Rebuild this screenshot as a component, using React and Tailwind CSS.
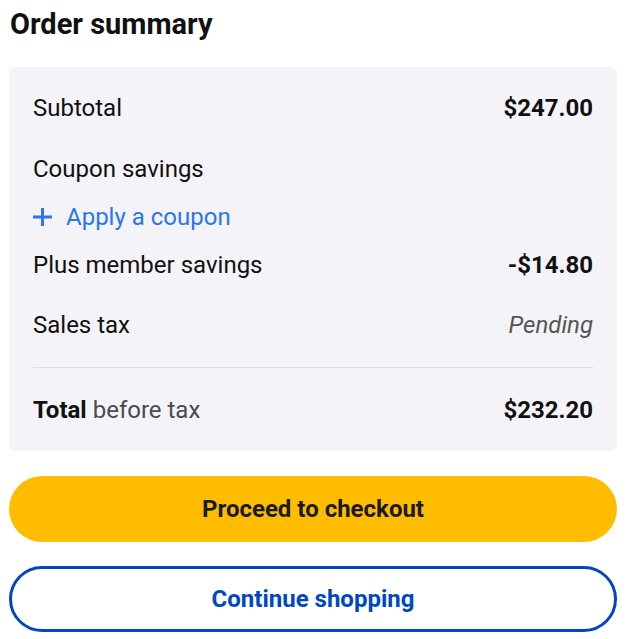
const Row = ({ label, value, className = '' }) => (
  <div className={`flex items-center justify-between ${className}`}>
    <span>{label}</span>
    <span>{value}</span>
  </div>
);

const PlusIcon = () => (
  <svg width="19" height="18" viewBox="0 0 19 18" fill="none" stroke="currentColor" strokeWidth="3">
    <line x1="0" y1="9" x2="19" y2="9" />
    <line x1="9.5" y1="0" x2="9.5" y2="18" />
  </svg>
);

const App = () => {
  return (
    <div className="w-[636px] bg-white pl-[9px] pr-[19px] pt-[6px] text-[#111] font-['Roboto',sans-serif]">
      <h1 className="text-[29px] font-bold leading-[36px] pl-px">Order summary</h1>

      <div className="mt-[25px] rounded-md bg-[#f4f4f8] px-[24px] pt-[26px] pb-[26px] text-[24px] leading-[30px]">
        <Row label="Subtotal" value={<span className="font-bold">$247.00</span>} />
        <div className="mt-[31px]">Coupon savings</div>
        <button className="mt-[18px] flex items-center gap-[14px] text-[#2b74f2]">
          <PlusIcon />
          <span>Apply a coupon</span>
        </button>
        <Row className="mt-[18px]" label="Plus member savings" value={<span className="font-bold">-$14.80</span>} />
        <Row className="mt-[30px]" label="Sales tax" value={<span className="italic text-[#555]">Pending</span>} />
        <div className="mt-[27px] border-t border-[#dcdce2]" />
        <Row
          className="mt-[27px]"
          label={<span><span className="font-bold">Total</span> <span className="text-[#4a4a52]">before tax</span></span>}
          value={<span className="font-bold">$232.20</span>}
        />
      </div>

      <button className="mt-[25px] flex h-[66px] w-full items-center justify-center rounded-full bg-[#ffbc00] text-[24px] font-bold text-[#1a1a1a]">
        Proceed to checkout
      </button>
      <button className="mt-[24px] flex h-[66px] w-full items-center justify-center rounded-full border-[3px] border-[#0047c2] bg-white text-[24px] font-bold text-[#0047c2]">
        Continue shopping
      </button>
    </div>
  );
};

export default App;
